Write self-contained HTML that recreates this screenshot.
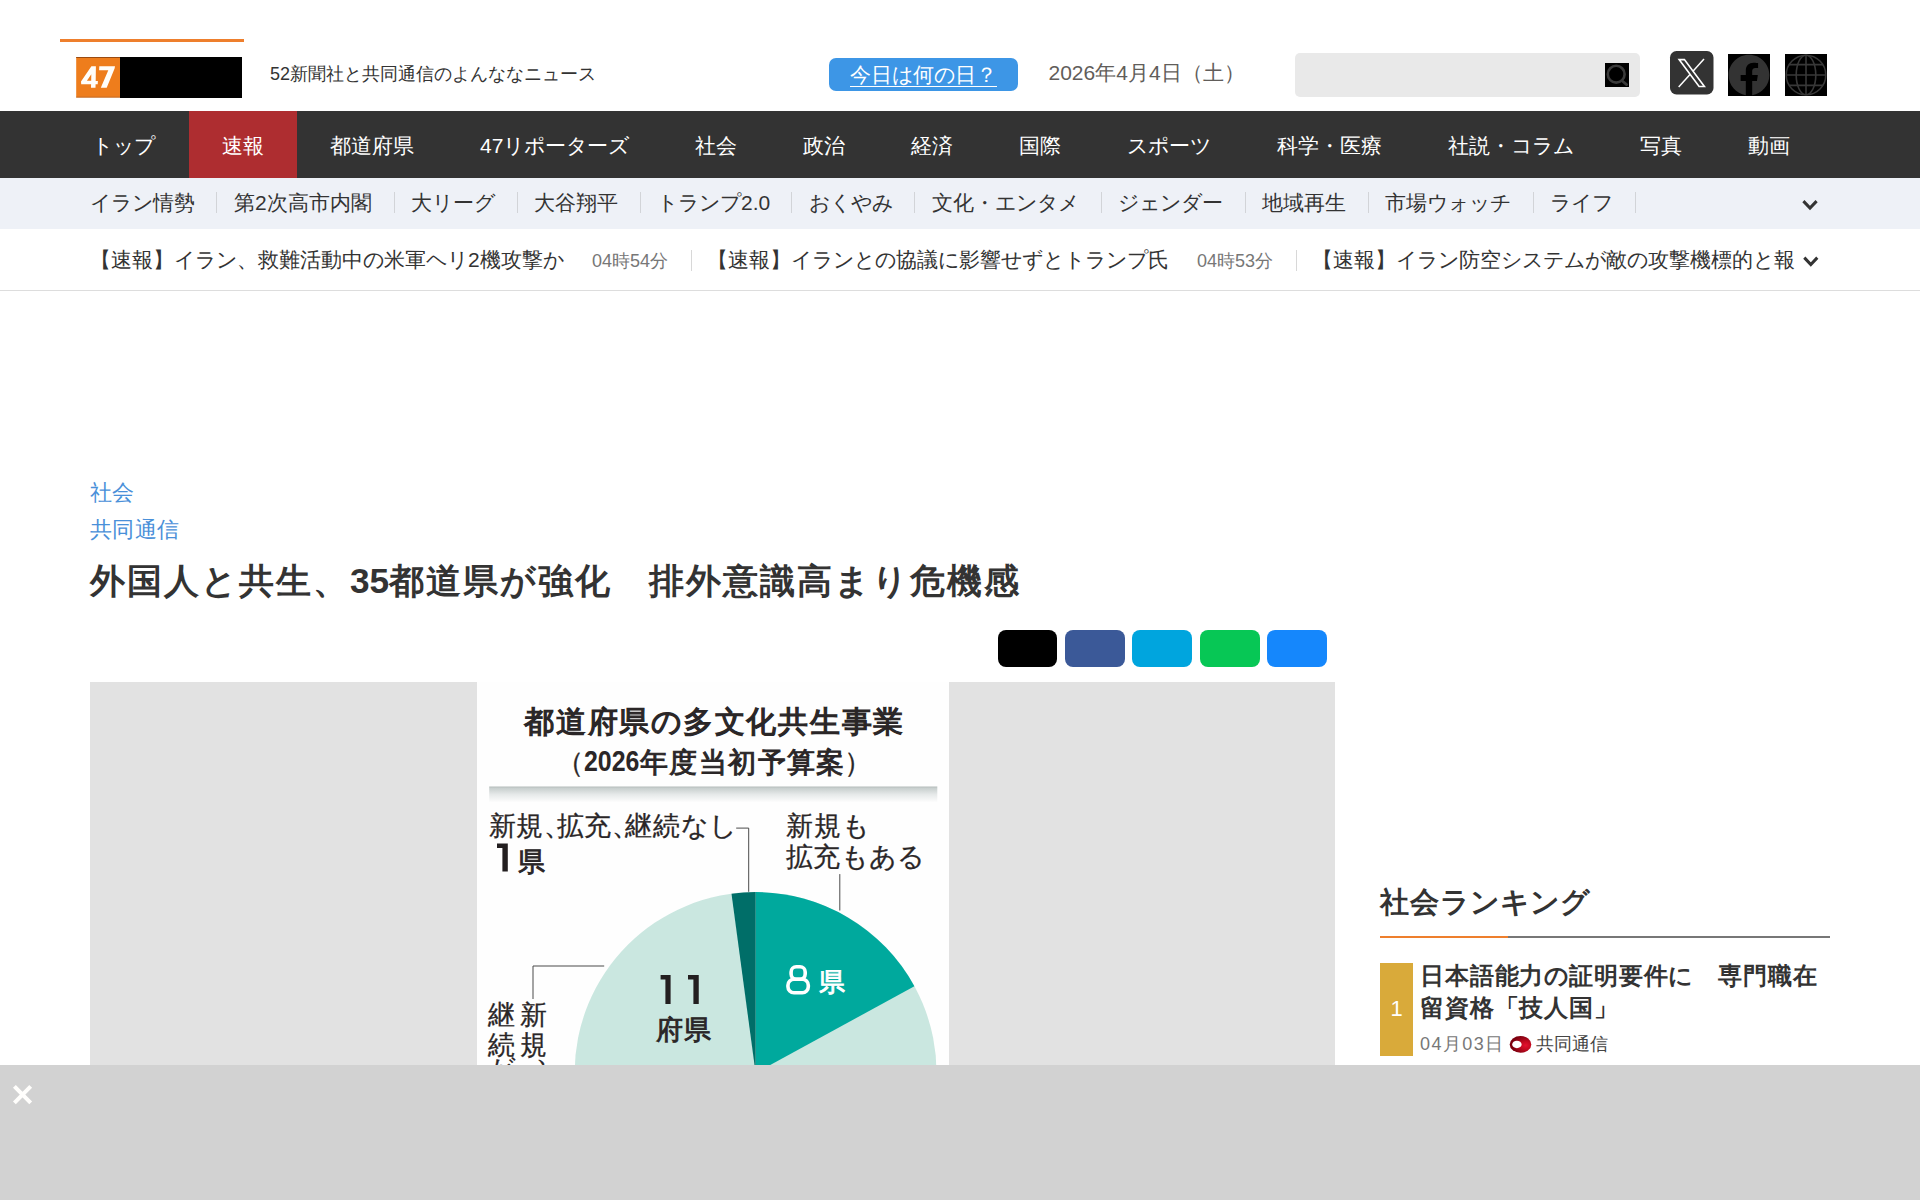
<!DOCTYPE html>
<html lang="ja">
<head>
<meta charset="utf-8">
<title>47NEWS</title>
<style>
*{box-sizing:border-box;margin:0;padding:0}
html,body{width:1920px;height:1200px;overflow:hidden;background:#fff}
body{font-family:"Liberation Sans",sans-serif;color:#333;position:relative}
.abs{position:absolute}
svg{position:absolute;display:block;overflow:visible}
i{font-style:normal;display:inline-block;text-align:left}
.p18 i{width:18px}.p21 i{width:21px}.p224 i{width:22.4px}
.p37 i{width:37px}.p37 i.k{width:38px}
.p30 i{width:30px}.p25 i{width:24.85px}
/* header */
#logo-line{left:60px;top:39px;width:184px;height:3px;background:#ee7f2d}
#logo-b{left:120px;top:57px;width:121.5px;height:40.5px;background:#000}
#tagline{left:270px;top:62px;font-size:18px;line-height:24px;color:#333;white-space:nowrap}
#today{left:829px;top:58.2px;width:189px;height:33px;border-radius:7px;background:#3d96e6;color:#fff;font-size:21px;line-height:33px;text-align:center;white-space:nowrap}
#today u{text-decoration:none;display:block;position:absolute;left:21px;top:27.6px;width:147px;height:1.3px;background:#fff}
#date{left:1048.5px;top:60px;font-size:21px;line-height:26px;color:#615d5a;white-space:nowrap}
#search{left:1294.5px;top:52.5px;width:345px;height:44.5px;border-radius:5px;background:#e9e9e9}
#nav{left:0;top:111px;width:1920px;height:67px;background:#333}
#nav span{position:absolute;top:0;height:67px;line-height:69px;font-size:21px;color:#fff;white-space:nowrap}
#sub{left:0;top:178px;width:1920px;height:51px;background:#eef1f7}
#sub span{position:absolute;top:0;height:51px;line-height:50px;font-size:21px;color:#333;white-space:nowrap}
#sub b{position:absolute;top:14px;width:1px;height:21px;background:#d2d4d8}
#tick{left:0;top:229px;width:1920px;height:62px;background:#fff;border-bottom:1px solid #ddd;overflow:hidden}
#tick span{position:absolute;top:0;height:62px;line-height:61px;white-space:nowrap}
#tick .t{font-size:21px;color:#333}
#tick .m{font-size:18px;color:#777;line-height:64px}
#tick b{position:absolute;top:21px;width:1px;height:21px;background:#d8d8d8}
/* article */
.crumb{left:90px;font-size:22.4px;line-height:30px;color:#4a90d9;white-space:nowrap}
#title{left:90px;top:558px;font-size:35.2px;line-height:46px;font-weight:bold;color:#333;white-space:nowrap}
.share{top:630px;width:59.8px;height:37.2px;border-radius:8px}
#imgbox{left:90px;top:682.4px;width:1245px;height:400px;background:#e2e2e2}
#info{left:477px;top:682.4px;width:472px;height:400px;background:#fefefe;overflow:hidden}
#info .tx{position:absolute;white-space:nowrap;color:#2a2627;line-height:1.2}
#info .tx i{width:var(--p)}
#info .b{font-weight:bold}
#info .tx{-webkit-text-stroke:0.3px currentColor}
#info .m{-webkit-text-stroke:0.9px currentColor}
#info .s12{-webkit-text-stroke:1.25px currentColor}
#info .s10{-webkit-text-stroke:1.0px currentColor}
#info .b{-webkit-text-stroke:0}
#info .v{width:27px}
#info .v i{display:block;width:27px;height:29.3px;line-height:29.3px}
/* sidebar */
#rk-h{left:1380px;top:880px;font-size:28.8px;line-height:44px;font-weight:bold;color:#333;white-space:nowrap}
#rk-l1{left:1380px;top:936px;width:450px;height:2px;background:#777}
#rk-l2{left:1380px;top:936px;width:128px;height:2px;background:#ee7f2d}
#rk-n{left:1380px;top:963px;width:33px;height:92.5px;background:#d9aa3a;color:#fff;font-size:22px;line-height:92px;text-align:center}
#rk-t{left:1420px;top:960px;font-size:24px;line-height:32px;font-weight:bold;color:#333;white-space:nowrap}
#rk-d{left:1420px;top:1032px;font-size:18px;line-height:24px;color:#777;white-space:nowrap}
#rk-s{left:1536px;top:1032px;font-size:18px;line-height:24px;color:#444;white-space:nowrap}
#ov{left:0;top:1065px;width:1920px;height:135px;background:#d2d2d2}
</style>
</head>
<body>
<!-- HEADER -->
<div class="abs" id="logo-line"></div>
<svg style="left:76px;top:57px" width="44" height="41" viewBox="76 57 44 41">
<rect x="76.2" y="57" width="43.8" height="40.5" fill="#ee7d1c"/>
<rect x="76.2" y="57" width="43.8" height="1" fill="#9a4a10"/>
<rect x="76.2" y="96.7" width="43.8" height="0.8" fill="#b8682a"/>
<path fill="#fffefa" fill-rule="evenodd" d="M91.4 66.2H95.9L95.7 81H97.9L97.7 84.3H95.6L95.5 87.8H91L91.1 84.3H81.2L81 81.6ZM91.3 74.2L86.9 80.7H91.2Z"/>
<path fill="#fffefa" d="M99.3 66.2H115L114.6 68.6L106.7 87.8H100.8L108.3 70.2H99.1Z"/>
</svg>
<div class="abs" id="logo-b"></div>
<div class="abs p18" id="tagline">52<i>新</i><i>聞</i><i>社</i><i class="k">と</i><i>共</i><i>同</i><i>通</i><i>信</i><i class="k">の</i><i class="k">よ</i><i class="k">ん</i><i class="k">な</i><i class="k">な</i><i class="k">ニ</i><i class="k">ュ</i><i>ー</i><i class="k">ス</i></div>
<div class="abs p21" id="today"><i>今</i><i>日</i><i class="k">は</i><i>何</i><i class="k">の</i><i>日</i><i>？</i><u></u></div>
<div class="abs p21" id="date">2026<i>年</i>4<i>月</i>4<i>日</i><i>（</i><i>土</i><i>）</i></div>
<div class="abs" id="search"></div>
<svg style="left:1605px;top:63px" width="24" height="24" viewBox="0 0 24 24">
<rect width="24" height="24" fill="#000"/>
<circle cx="11.2" cy="11.2" r="8.4" fill="none" stroke="#3a3a3a" stroke-width="2.6"/>
<line x1="17.6" y1="18.2" x2="21.6" y2="21.6" stroke="#3a3a3a" stroke-width="2.8" stroke-linecap="round"/>
</svg>
<svg style="left:1669.5px;top:51px" width="43.5" height="43.5" viewBox="0 0 43.5 43.5">
<rect width="43.5" height="43.5" rx="6.5" fill="#333"/>
<path d="M34 7.9L8.7 36" stroke="#fff" stroke-width="1.5" fill="none"/><path d="M9.1 8.6H14.4L34.4 35.5H29.1Z" fill="#333" stroke="#fff" stroke-width="1.6" stroke-linejoin="miter"/>
</svg>
<svg style="left:1728px;top:54px" width="42" height="42" viewBox="0 0 42 42">
<rect width="42" height="42" fill="#000"/>
<g transform="translate(0.6,0.6) scale(1.7)"><path fill="#333" d="M24 12.073c0-6.627-5.373-12-12-12s-12 5.373-12 12c0 5.99 4.388 10.954 10.125 11.854v-8.385H7.078v-3.47h3.047V9.43c0-3.007 1.792-4.669 4.533-4.669 1.312 0 2.686.235 2.686.235v2.953H15.83c-1.491 0-1.956.925-1.956 1.874v2.25h3.328l-.532 3.47h-2.796v8.385C19.612 23.027 24 18.062 24 12.073z"/></g>
</svg>
<svg style="left:1785px;top:54px" width="42" height="42" viewBox="0 0 42 42">
<rect width="42" height="42" fill="#000"/>
<g fill="none" stroke="#383838" stroke-width="1.6">
<circle cx="21" cy="21" r="19.8"/>
<ellipse cx="21" cy="21" rx="9.8" ry="19.8"/>
<line x1="21" y1="1.2" x2="21" y2="40.8"/>
<line x1="1.2" y1="21" x2="40.8" y2="21"/>
<line x1="4.2" y1="10.6" x2="37.8" y2="10.6"/>
<line x1="4.2" y1="31.4" x2="37.8" y2="31.4"/>
</g>
</svg>
<!-- NAV -->
<div class="abs p21" id="nav">
<span style="left:91.5px"><i class="k">ト</i><i class="k">ッ</i><i class="k">プ</i></span>
<span style="left:189px;width:108px;background:#ae2d30;text-align:center"><i>速</i><i>報</i></span>
<span style="left:330px"><i>都</i><i>道</i><i>府</i><i>県</i></span>
<span style="left:480px">47<i class="k">リ</i><i class="k">ポ</i><i>ー</i><i class="k">タ</i><i>ー</i><i class="k">ズ</i></span>
<span style="left:695px"><i>社</i><i>会</i></span>
<span style="left:803px"><i>政</i><i>治</i></span>
<span style="left:911px"><i>経</i><i>済</i></span>
<span style="left:1019px"><i>国</i><i>際</i></span>
<span style="left:1127px"><i class="k">ス</i><i class="k">ポ</i><i>ー</i><i class="k">ツ</i></span>
<span style="left:1277px"><i>科</i><i>学</i><i>・</i><i>医</i><i>療</i></span>
<span style="left:1448px"><i>社</i><i>説</i><i>・</i><i class="k">コ</i><i class="k">ラ</i><i class="k">ム</i></span>
<span style="left:1640px"><i>写</i><i>真</i></span>
<span style="left:1748px"><i>動</i><i>画</i></span>
</div>
<div class="abs p21" id="sub">
<span style="left:90px"><i class="k">イ</i><i class="k">ラ</i><i class="k">ン</i><i>情</i><i>勢</i></span><b style="left:216px"></b>
<span style="left:234px"><i>第</i>2<i>次</i><i>高</i><i>市</i><i>内</i><i>閣</i></span><b style="left:393.5px"></b>
<span style="left:411px"><i>大</i><i class="k">リ</i><i>ー</i><i class="k">グ</i></span><b style="left:516.5px"></b>
<span style="left:534px"><i>大</i><i>谷</i><i>翔</i><i>平</i></span><b style="left:640px"></b>
<span style="left:657px"><i class="k">ト</i><i class="k">ラ</i><i class="k">ン</i><i class="k">プ</i>2.0</span><b style="left:791px"></b>
<span style="left:809px"><i class="k">お</i><i class="k">く</i><i class="k">や</i><i class="k">み</i></span><b style="left:914px"></b>
<span style="left:932px"><i>文</i><i>化</i><i>・</i><i class="k">エ</i><i class="k">ン</i><i class="k">タ</i><i class="k">メ</i></span><b style="left:1100.5px"></b>
<span style="left:1118px"><i class="k">ジ</i><i class="k">ェ</i><i class="k">ン</i><i class="k">ダ</i><i>ー</i></span><b style="left:1244.5px"></b>
<span style="left:1262px"><i>地</i><i>域</i><i>再</i><i>生</i></span><b style="left:1368px"></b>
<span style="left:1385px"><i>市</i><i>場</i><i class="k">ウ</i><i class="k">ォ</i><i class="k">ッ</i><i class="k">チ</i></span><b style="left:1532.5px"></b>
<span style="left:1550px"><i class="k">ラ</i><i class="k">イ</i><i class="k">フ</i></span><b style="left:1634.5px"></b>
</div>
<svg style="left:1800px;top:198px" width="20" height="14" viewBox="1800 198 20 14"><polyline points="1803.4,201.1 1810,208.1 1816.6,201.1" fill="none" stroke="#333" stroke-width="3"/></svg>
<div class="abs" id="tick">
<span class="t p21" style="left:90px"><i>【</i><i>速</i><i>報</i><i>】</i><i class="k">イ</i><i class="k">ラ</i><i class="k">ン</i><i>、</i><i>救</i><i>難</i><i>活</i><i>動</i><i>中</i><i class="k">の</i><i>米</i><i>軍</i><i class="k">ヘ</i><i class="k">リ</i>2<i>機</i><i>攻</i><i>撃</i><i class="k">か</i></span>
<span class="m p18" style="left:592px">04<i>時</i>54<i>分</i></span><b style="left:690.5px"></b>
<span class="t p21" style="left:707px"><i>【</i><i>速</i><i>報</i><i>】</i><i class="k">イ</i><i class="k">ラ</i><i class="k">ン</i><i class="k">と</i><i class="k">の</i><i>協</i><i>議</i><i class="k">に</i><i>影</i><i>響</i><i class="k">せ</i><i class="k">ず</i><i class="k">と</i><i class="k">ト</i><i class="k">ラ</i><i class="k">ン</i><i class="k">プ</i><i>氏</i></span>
<span class="m p18" style="left:1197px">04<i>時</i>53<i>分</i></span><b style="left:1295.5px"></b>
<span class="t p21" style="left:1312px;width:484px;overflow:hidden"><i>【</i><i>速</i><i>報</i><i>】</i><i class="k">イ</i><i class="k">ラ</i><i class="k">ン</i><i>防</i><i>空</i><i class="k">シ</i><i class="k">ス</i><i class="k">テ</i><i class="k">ム</i><i class="k">が</i><i>敵</i><i class="k">の</i><i>攻</i><i>撃</i><i>機</i><i>標</i><i>的</i><i class="k">と</i><i>報</i></span>
</div>
<svg style="left:1800px;top:254px" width="20" height="14" viewBox="1800 254 20 14"><polyline points="1804.3,257.6 1810.8,264.5 1817.3,257.6" fill="none" stroke="#333" stroke-width="3"/></svg>
<!-- ARTICLE -->
<div class="abs crumb p224" style="top:477.7px"><i>社</i><i>会</i></div>
<div class="abs crumb p224" style="top:514.7px"><i>共</i><i>同</i><i>通</i><i>信</i></div>
<div class="abs p37" id="title"><i>外</i><i>国</i><i>人</i><i class="k">と</i><i>共</i><i>生</i><i>、</i>35<i>都</i><i>道</i><i>県</i><i class="k">が</i><i>強</i><i>化</i><i>　</i><i>排</i><i>外</i><i>意</i><i>識</i><i>高</i><i class="k">ま</i><i class="k">り</i><i>危</i><i>機</i><i>感</i></div>
<div class="abs share" style="left:997.5px;background:#000"></div>
<div class="abs share" style="left:1065px;background:#3b5998"></div>
<div class="abs share" style="left:1132.2px;background:#00a5de"></div>
<div class="abs share" style="left:1200px;background:#07c755"></div>
<div class="abs share" style="left:1267.2px;background:#1587fc"></div>
<div class="abs" id="imgbox"></div>
<div class="abs" id="info">
<svg style="left:0;top:0" width="472" height="400" viewBox="0 0 472 400">
<defs><linearGradient id="bg1" x1="0" y1="0" x2="0" y2="1"><stop offset="0" stop-color="#b4bcbb"/><stop offset="0.12" stop-color="#c9d0cf"/><stop offset="0.5" stop-color="#e6e9e9"/><stop offset="1" stop-color="#fefefe"/></linearGradient></defs>
<rect x="12.2" y="104.5" width="448.1" height="16" fill="url(#bg1)"/>
<circle cx="278.6" cy="391.1" r="181" fill="#cae7e0"/>
<path d="M278.6 391.1L278.6 210.1A181 181 0 0 1 437.4 304.2Z" fill="#00a99d"/>
<path d="M278.6 391.1L254.5 211.7A181 181 0 0 1 278.6 210.1Z" fill="#006e68"/>
<g fill="none" stroke="#4a4a4a" stroke-width="1">
<path d="M259.2 146.1H271.7V209.8"/>
<path d="M362.8 192.1V228.5"/>
<path d="M127.2 284H56V317"/>
</g>
<g fill="none" stroke="#fff" stroke-width="3.6">
<rect x="314.1" y="284.8" width="14.1" height="12.4" rx="5.2"/>
<rect x="310.95" y="297.2" width="20.35" height="13.6" rx="6"/>
</g>
<g fill="#231f20">
<path d="M183.6 293.1H193.6V321.9H188.4V297.5H183.6Z"/>
<path d="M211 293.1H221.75V321.9H216.4V297.5H211Z"/>
<path d="M20 162.8H30.8V190.7H25.4V167.2H20Z" transform="translate(0,-1.3)"/>
</g>
</svg>
<div class="tx s12" style="left:47px;top:21.6px;font-size:30.3px;--p:31.75px"><i>都</i><i>道</i><i>府</i><i>県</i><i class="k">の</i><i>多</i><i>文</i><i>化</i><i>共</i><i>生</i><i>事</i><i>業</i></div>
<div class="tx" style="left:79.2px;top:63.5px;font-size:27.5px;--p:29.4px"><i>（</i></div>
<div class="tx b" style="left:107px;top:61px;font-size:30px;transform:scaleX(0.83);transform-origin:0 0">2026</div>
<div class="tx s10" style="left:163px;top:63.5px;font-size:27.5px;--p:29.4px"><i>年</i><i>度</i><i>当</i><i>初</i><i>予</i><i>算</i><i>案</i></div>
<div class="tx" style="left:366.7px;top:63.5px;font-size:27.5px;--p:29.4px"><i>）</i></div>
<div class="tx" style="left:11.5px;top:128.2px;font-size:26.5px;--p:27.8px"><i>新</i><i>規</i><i>、</i></div>
<div class="tx" style="left:80.3px;top:128.2px;font-size:26.5px;--p:27.2px"><i>拡</i><i>充</i><i>、</i></div>
<div class="tx" style="left:148.3px;top:128.2px;font-size:26.5px;--p:27.9px"><i>継</i><i>続</i><i class="k">な</i><i class="k">し</i></div>
<div class="tx m" style="left:41px;top:163.5px;font-size:27px;--p:27px"><i>県</i></div>
<div class="tx" style="left:308.5px;top:128.2px;font-size:26.5px;--p:28.3px"><i>新</i><i>規</i><i class="k">も</i></div>
<div class="tx" style="left:308.5px;top:159.2px;font-size:26.5px;--p:27.9px"><i>拡</i><i>充</i><i class="k">も</i><i class="k">あ</i><i class="k">る</i></div>
<div class="tx m" style="left:342px;top:284.5px;font-size:26px;--p:26px;color:#fff"><i>県</i></div>
<div class="tx m" style="left:179px;top:331.2px;font-size:27px;--p:27.5px"><i>府</i><i>県</i></div>
<div class="tx v" style="left:42.5px;top:318.9px;font-size:26.5px"><i>新</i><i>規</i><i style="position:relative;left:16px;top:-21px">、</i></div>
<div class="tx v" style="left:10.7px;top:318.9px;font-size:26.5px"><i>継</i><i>続</i><i style="position:relative;top:-4.5px">が</i></div>

</div>
<!-- SIDEBAR -->
<div class="abs p30" id="rk-h"><i>社</i><i>会</i><i class="k">ラ</i><i class="k">ン</i><i class="k">キ</i><i class="k">ン</i><i class="k">グ</i></div>
<div class="abs" id="rk-l1"></div><div class="abs" id="rk-l2"></div>
<div class="abs" id="rk-n">1</div>
<div class="abs p25" id="rk-t"><i>日</i><i>本</i><i>語</i><i>能</i><i>力</i><i class="k">の</i><i>証</i><i>明</i><i>要</i><i>件</i><i class="k">に</i><i>　</i><i>専</i><i>門</i><i>職</i><i>在</i><br><i>留</i><i>資</i><i>格</i><i>「</i><i>技</i><i>人</i><i>国</i><i>」</i></div>
<div class="abs" id="rk-d"><span style="letter-spacing:1.44px">04</span><i style="width:19.44px">月</i><span style="letter-spacing:1.44px">03</span><i style="width:19.44px">日</i></div>
<svg style="left:1509px;top:1035px" width="23" height="19" viewBox="1509 1035 23 19">
<defs><radialGradient id="kg" cx="0.74" cy="0.56" r="0.62"><stop offset="0" stop-color="#e4112e"/><stop offset="0.38" stop-color="#c40a20"/><stop offset="0.7" stop-color="#9a0618"/><stop offset="1" stop-color="#7c000e"/></radialGradient></defs>
<ellipse cx="1520.5" cy="1044.4" rx="10.8" ry="8.4" fill="url(#kg)"/>
<ellipse cx="1516.9" cy="1044.4" rx="4.7" ry="3.75" fill="#fff"/>
</svg>
<div class="abs p18" id="rk-s"><i>共</i><i>同</i><i>通</i><i>信</i></div>
<!-- OVERLAY -->
<div class="abs" id="ov"></div>
<svg style="left:10px;top:1082px" width="26" height="26" viewBox="10 1082 26 26"><path d="M14.4 1086.4L30.7 1102.8M30.7 1086.4L14.4 1102.8" stroke="#fffefc" stroke-width="4" fill="none"/></svg>
</body>
</html>
